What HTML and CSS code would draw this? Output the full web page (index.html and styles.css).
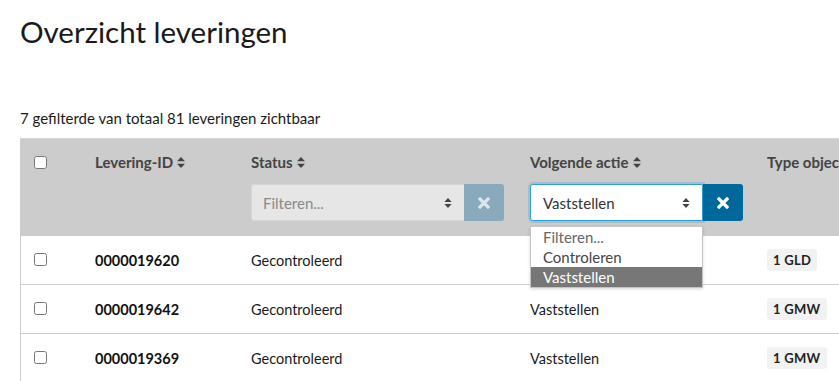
FILE: index.html
```html
<!DOCTYPE html>
<html lang="nl">
<head>
<meta charset="utf-8">
<title>Overzicht leveringen</title>
<link rel="stylesheet" href="styles.css">
</head>
<body>
<main class="page">
  <h1 class="title">Overzicht leveringen</h1>
  <p class="count">7 gefilterde van totaal 81 leveringen zichtbaar</p>
  <div class="table">
    <div class="thead">
      <div class="cell c-check"><input type="checkbox" class="cb"></div>
      <div class="cell c-id">
        <div class="th">Levering-ID <svg class="sort" viewBox="0 0 8 11"><path d="M4 0 L8 4.3 H0 Z M4 11 L8 6.7 H0 Z"/></svg></div>
      </div>
      <div class="cell c-status">
        <div class="th">Status <svg class="sort" viewBox="0 0 8 11"><path d="M4 0 L8 4.3 H0 Z M4 11 L8 6.7 H0 Z"/></svg></div>
        <div class="filter">
          <div class="select disabled"><span class="placeholder">Filteren...</span><svg class="arrows" viewBox="0 0 8 11"><path d="M4 0 L8 4.3 H0 Z M4 11 L8 6.7 H0 Z"/></svg></div>
          <div class="clear light"><svg viewBox="0 0 12 12"><path d="M2 2 L10 10 M10 2 L2 10"/></svg></div>
        </div>
      </div>
      <div class="cell c-actie">
        <div class="th">Volgende actie <svg class="sort" viewBox="0 0 8 11"><path d="M4 0 L8 4.3 H0 Z M4 11 L8 6.7 H0 Z"/></svg></div>
        <div class="filter">
          <div class="select focus"><span>Vaststellen</span><svg class="arrows" viewBox="0 0 8 11"><path d="M4 0 L8 4.3 H0 Z M4 11 L8 6.7 H0 Z"/></svg></div>
          <div class="clear"><svg viewBox="0 0 12 12"><path d="M2 2 L10 10 M10 2 L2 10"/></svg></div>
          <ul class="dropdown">
            <li class="opt muted">Filteren...</li>
            <li class="opt">Controleren</li>
            <li class="opt active">Vaststellen</li>
          </ul>
        </div>
      </div>
      <div class="cell c-type">
        <div class="th">Type object</div>
      </div>
    </div>

    <div class="row">
      <div class="cell c-check"><input type="checkbox" class="cb"></div>
      <div class="cell c-id"><strong>0000019620</strong></div>
      <div class="cell c-status">Gecontroleerd</div>
      <div class="cell c-actie"></div>
      <div class="cell c-type"><span class="badge">1 GLD</span></div>
    </div>
    <div class="row">
      <div class="cell c-check"><input type="checkbox" class="cb"></div>
      <div class="cell c-id"><strong>0000019642</strong></div>
      <div class="cell c-status">Gecontroleerd</div>
      <div class="cell c-actie">Vaststellen</div>
      <div class="cell c-type"><span class="badge">1 GMW</span></div>
    </div>
    <div class="row">
      <div class="cell c-check"><input type="checkbox" class="cb"></div>
      <div class="cell c-id"><strong>0000019369</strong></div>
      <div class="cell c-status">Gecontroleerd</div>
      <div class="cell c-actie">Vaststellen</div>
      <div class="cell c-type"><span class="badge">1 GMW</span></div>
    </div>
  </div>
</main>
</body>
</html>
```

FILE: styles.css
```css
html, body {
  margin: 0;
  padding: 0;
  overflow: hidden;
  background: #fff;
}
body {
  font-family: Lato, "Open Sans", sans-serif;
  color: #1a1a1a;
  font-size: 14px;
}
.page {
  padding: 0 0 0 20px;
}
.title {
  font-size: 29.5px;
  font-weight: 400;
  line-height: 36px;
  margin: 14px 0 0 0;
  color: #1a1a1a;
}
.count {
  margin: 58px 0 0 0;
  line-height: 20px;
  font-size: 15px;
}
.table {
  margin-top: 10px;
  width: 1000px;
  border-left: 1px solid #ccc;
}
.thead {
  display: grid;
  grid-template-columns: 59px 156px 279px 237px 1fr;
  background: #cccccc;
  border-top: 1px solid #d9d9d9;
  height: 97px;
}
.row {
  display: grid;
  grid-template-columns: 59px 156px 279px 237px 1fr;
  height: 48px;
  border-bottom: 1px solid #cfcfcf;
  align-items: center;
}
.cell {
  padding-left: 15px;
}
.thead .cell {
  padding-top: 13px;
}
.c-check {
  padding-left: 13px;
}
.cb {
  margin: 0;
  width: 13px;
  height: 13px;
  display: block;
}
.thead .c-check .cb {
  margin-top: 4px;
}
.row .c-check .cb {
  margin-top: -2px;
}
.th {
  font-weight: 700;
  color: #444;
  font-size: 15px;
  line-height: 20px;
  display: flex;
  align-items: center;
  gap: 4px;
  white-space: nowrap;
}
.sort {
  width: 8px;
  height: 11px;
  fill: #444;
}
.filter {
  position: relative;
  display: flex;
  margin-top: 12px;
  height: 37px;
}
.c-status .filter {
  width: 253px;
}
.c-actie .filter {
  width: 213px;
}
.select {
  flex: 1;
  display: flex;
  align-items: center;
  justify-content: space-between;
  padding: 0 12px;
  border-radius: 3px 0 0 3px;
  font-size: 15px;
  box-sizing: border-box;
}
.select.disabled {
  background: #e6e6e6;
  border: 1px solid #d6d6d6;
  border-right: none;
  padding-left: 11px;
}
.placeholder {
  color: #8a8a8a;
}
.select.focus {
  background: #fff;
  border: 1px solid #2aa3dc;
  box-shadow: 0 0 0 2px #a9bcc8;
  color: #333;
}
.arrows {
  width: 8px;
  height: 10px;
  fill: #444;
}
.clear {
  width: 40px;
  display: flex;
  align-items: center;
  justify-content: center;
  background: #01689b;
  border-radius: 0 3px 3px 0;
}
.clear.light {
  background: #89a9bd;
}
.clear svg {
  width: 12px;
  height: 12px;
  stroke: #fff;
  stroke-width: 3.2;
  stroke-linecap: square;
  fill: none;
}
.clear.light svg {
  stroke: #dde6ec;
}
.dropdown {
  position: absolute;
  top: 42px;
  left: 0;
  width: 173px;
  margin: 0;
  padding: 0;
  list-style: none;
  background: #fff;
  border: 1px solid #c4c4c4;
  box-shadow: 0 1px 3px rgba(0, 0, 0, 0.15);
  box-sizing: border-box;
  font-size: 15px;
  z-index: 2;
}
.opt {
  height: 20px;
  line-height: 20px;
  padding-left: 12px;
  color: #444;
}
.opt.muted {
  color: #666;
}
.opt.active {
  background: #777;
  color: #fff;
}
.row .cell {
  font-size: 14.5px;
  color: #1a1a1a;
}
.row strong {
  font-weight: 700;
  color: #111;
}
.badge {
  display: inline-block;
  background: #f2f2f2;
  border-radius: 3px;
  font-weight: 700;
  font-size: 13px;
  line-height: 22px;
  padding: 0 6px;
  color: #222;
  letter-spacing: 0.3px;
}
```
